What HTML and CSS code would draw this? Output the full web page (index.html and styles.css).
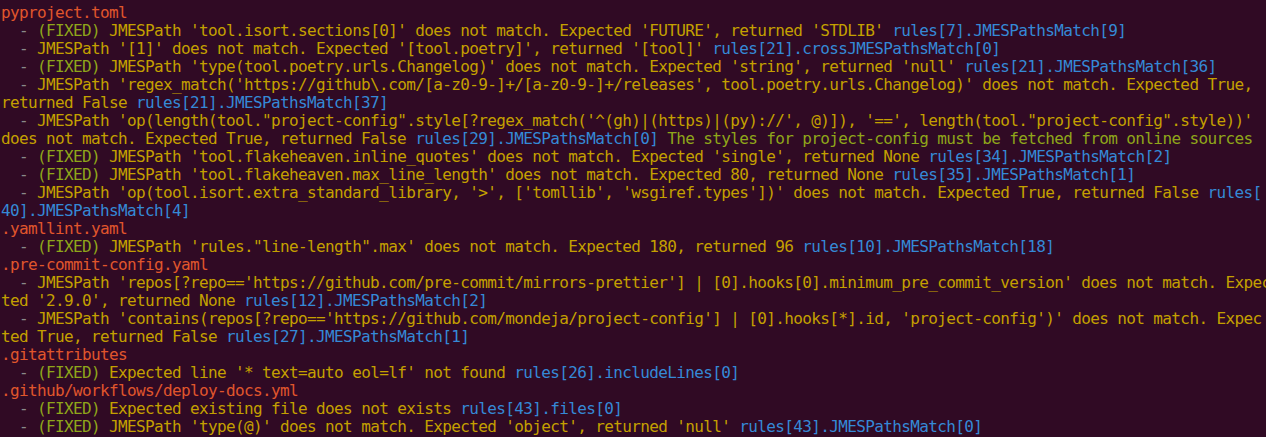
FILE: index.html
```html
<!DOCTYPE html>
<html lang="en">
<head>
<meta charset="utf-8">
<title>project-config check</title>
<link rel="stylesheet" href="styles.css">
</head>
<body>
<div class="term">
<div class="ln f">pyproject.toml</div>
<div class="ln"><span class="d">  - </span><span class="g">(FIXED)</span><span class="y"> JMESPath 'tool.isort.sections[0]' does not match. Expected 'FUTURE', returned 'STDLIB' </span><span class="b">rules[7].JMESPathsMatch[9]</span></div>
<div class="ln"><span class="d">  - </span><span class="y">JMESPath '[1]' does not match. Expected '[tool.poetry]', returned '[tool]' </span><span class="b">rules[21].crossJMESPathsMatch[0]</span></div>
<div class="ln"><span class="d">  - </span><span class="g">(FIXED)</span><span class="y"> JMESPath 'type(tool.poetry.urls.Changelog)' does not match. Expected 'string', returned 'null' </span><span class="b">rules[21].JMESPathsMatch[36]</span></div>
<div class="ln"><span class="d">  - </span><span class="y">JMESPath 'regex_match('https://github\.com/[a-z0-9-]+/[a-z0-9-]+/releases', tool.poetry.urls.Changelog)' does not match. Expected True,</span></div>
<div class="ln"><span class="y">returned False </span><span class="b">rules[21].JMESPathsMatch[37]</span></div>
<div class="ln"><span class="d">  - </span><span class="y">JMESPath 'op(length(tool."project-config".style[?regex_match('^(gh)|(https)|(py)://', @)]), '==', length(tool."project-config".style))'</span></div>
<div class="ln"><span class="y">does not match. Expected True, returned False </span><span class="b">rules[29].JMESPathsMatch[0]</span><span class="g"> The styles for project-config must be fetched from online sources</span></div>
<div class="ln"><span class="d">  - </span><span class="g">(FIXED)</span><span class="y"> JMESPath 'tool.flakeheaven.inline_quotes' does not match. Expected 'single', returned None </span><span class="b">rules[34].JMESPathsMatch[2]</span></div>
<div class="ln"><span class="d">  - </span><span class="g">(FIXED)</span><span class="y"> JMESPath 'tool.flakeheaven.max_line_length' does not match. Expected 80, returned None </span><span class="b">rules[35].JMESPathsMatch[1]</span></div>
<div class="ln"><span class="d">  - </span><span class="y">JMESPath 'op(tool.isort.extra_standard_library, '&gt;', ['tomllib', 'wsgiref.types'])' does not match. Expected True, returned False </span><span class="b">rules[</span></div>
<div class="ln"><span class="b">40].JMESPathsMatch[4]</span></div>
<div class="ln f">.yamllint.yaml</div>
<div class="ln"><span class="d">  - </span><span class="g">(FIXED)</span><span class="y"> JMESPath 'rules."line-length".max' does not match. Expected 180, returned 96 </span><span class="b">rules[10].JMESPathsMatch[18]</span></div>
<div class="ln f">.pre-commit-config.yaml</div>
<div class="ln"><span class="d">  - </span><span class="y">JMESPath 'repos[?repo=='https://github.com/pre-commit/mirrors-prettier'] | [0].hooks[0].minimum_pre_commit_version' does not match. Expec</span></div>
<div class="ln"><span class="y">ted '2.9.0', returned None </span><span class="b">rules[12].JMESPathsMatch[2]</span></div>
<div class="ln"><span class="d">  - </span><span class="y">JMESPath 'contains(repos[?repo=='https://github.com/mondeja/project-config'] | [0].hooks[*].id, 'project-config')' does not match. Expec</span></div>
<div class="ln"><span class="y">ted True, returned False </span><span class="b">rules[27].JMESPathsMatch[1]</span></div>
<div class="ln f">.gitattributes</div>
<div class="ln"><span class="d">  - </span><span class="g">(FIXED)</span><span class="y"> Expected line '* text=auto eol=lf' not found </span><span class="b">rules[26].includeLines[0]</span></div>
<div class="ln f">.github/workflows/deploy-docs.yml</div>
<div class="ln"><span class="d">  - </span><span class="g">(FIXED)</span><span class="y"> Expected existing file does not exists </span><span class="b">rules[43].files[0]</span></div>
<div class="ln"><span class="d">  - </span><span class="g">(FIXED)</span><span class="y"> JMESPath 'type(@)' does not match. Expected 'object', returned 'null' </span><span class="b">rules[43].JMESPathsMatch[0]</span></div>
</div>
</body>
</html>
```
FILE: styles.css
```css
html, body {
  margin: 0;
  padding: 0;
  background: #300a24;
}
.term {
  width: 1266px;
  height: 437px;
  overflow: hidden;
  box-sizing: border-box;
  padding: 4px 0 0 1px;
  background: #300a24;
  font-family: "DejaVu Sans Mono", "Liberation Mono", monospace;
  font-size: 16px;
  letter-spacing: -0.63px;
  line-height: 18px;
  color: #c4a000;
}
.ln {
  white-space: pre;
  height: 18px;
}
.f { color: #e0562c; }
.d { color: #8a8a8a; }
.g { color: #8fa61a; }
.y { color: #c4a000; }
.b { color: #3589d6; }
```
